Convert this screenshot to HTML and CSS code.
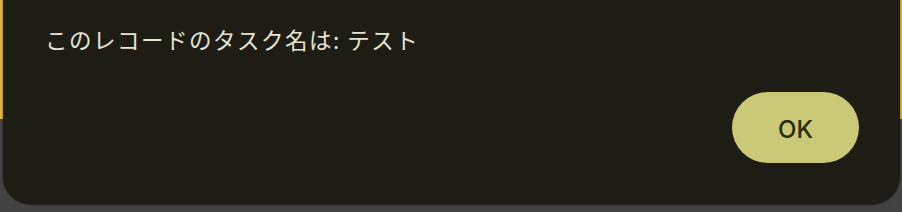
FILE: index.html
```html
<!DOCTYPE html>
<html lang="ja">
<head>
<meta charset="utf-8">
<link rel="stylesheet" href="styles.css">
</head>
<body>
<div class="backdrop"></div>
<div class="dialog">
  <p class="message">このレコードのタスク名は: テスト</p>
  <div class="actions">
    <button class="ok">OK</button>
  </div>
</div>
</body>
</html>
```
FILE: styles.css
```css
html, body {
  margin: 0;
  padding: 0;
}
body {
  width: 902px;
  height: 212px;
  background: #434343;
  position: relative;
  overflow: hidden;
  font-family: "Noto Sans CJK JP", "Noto Sans", sans-serif;
}
.backdrop {
  height: 119px;
  background: #e2b63d;
}
.dialog {
  position: absolute;
  left: 3px;
  right: 2px;
  top: -40px;
  bottom: 8px;
  background: #1d1d16;
  border-radius: 28px;
  box-shadow: 0 1px 2px rgba(0,0,0,0.6);
  box-sizing: border-box;
  padding: 0 41px 41px 42px;
  display: flex;
  flex-direction: column;
}
.message {
  margin: 64px 0 0 0;
  color: #e7e3d0;
  font-size: 22.5px;
  line-height: 30px;
  letter-spacing: 1.5px;
}
.actions {
  margin-top: auto;
  display: flex;
  justify-content: flex-end;
}
.ok {
  width: 127px;
  height: 71px;
  border: none;
  border-radius: 36px;
  background: #c9c978;
  color: #2a2b05;
  font-family: "Inter", "Noto Sans", sans-serif;
  font-weight: 500;
  font-size: 24px;
  padding: 3px 0 0 0;
}
```
